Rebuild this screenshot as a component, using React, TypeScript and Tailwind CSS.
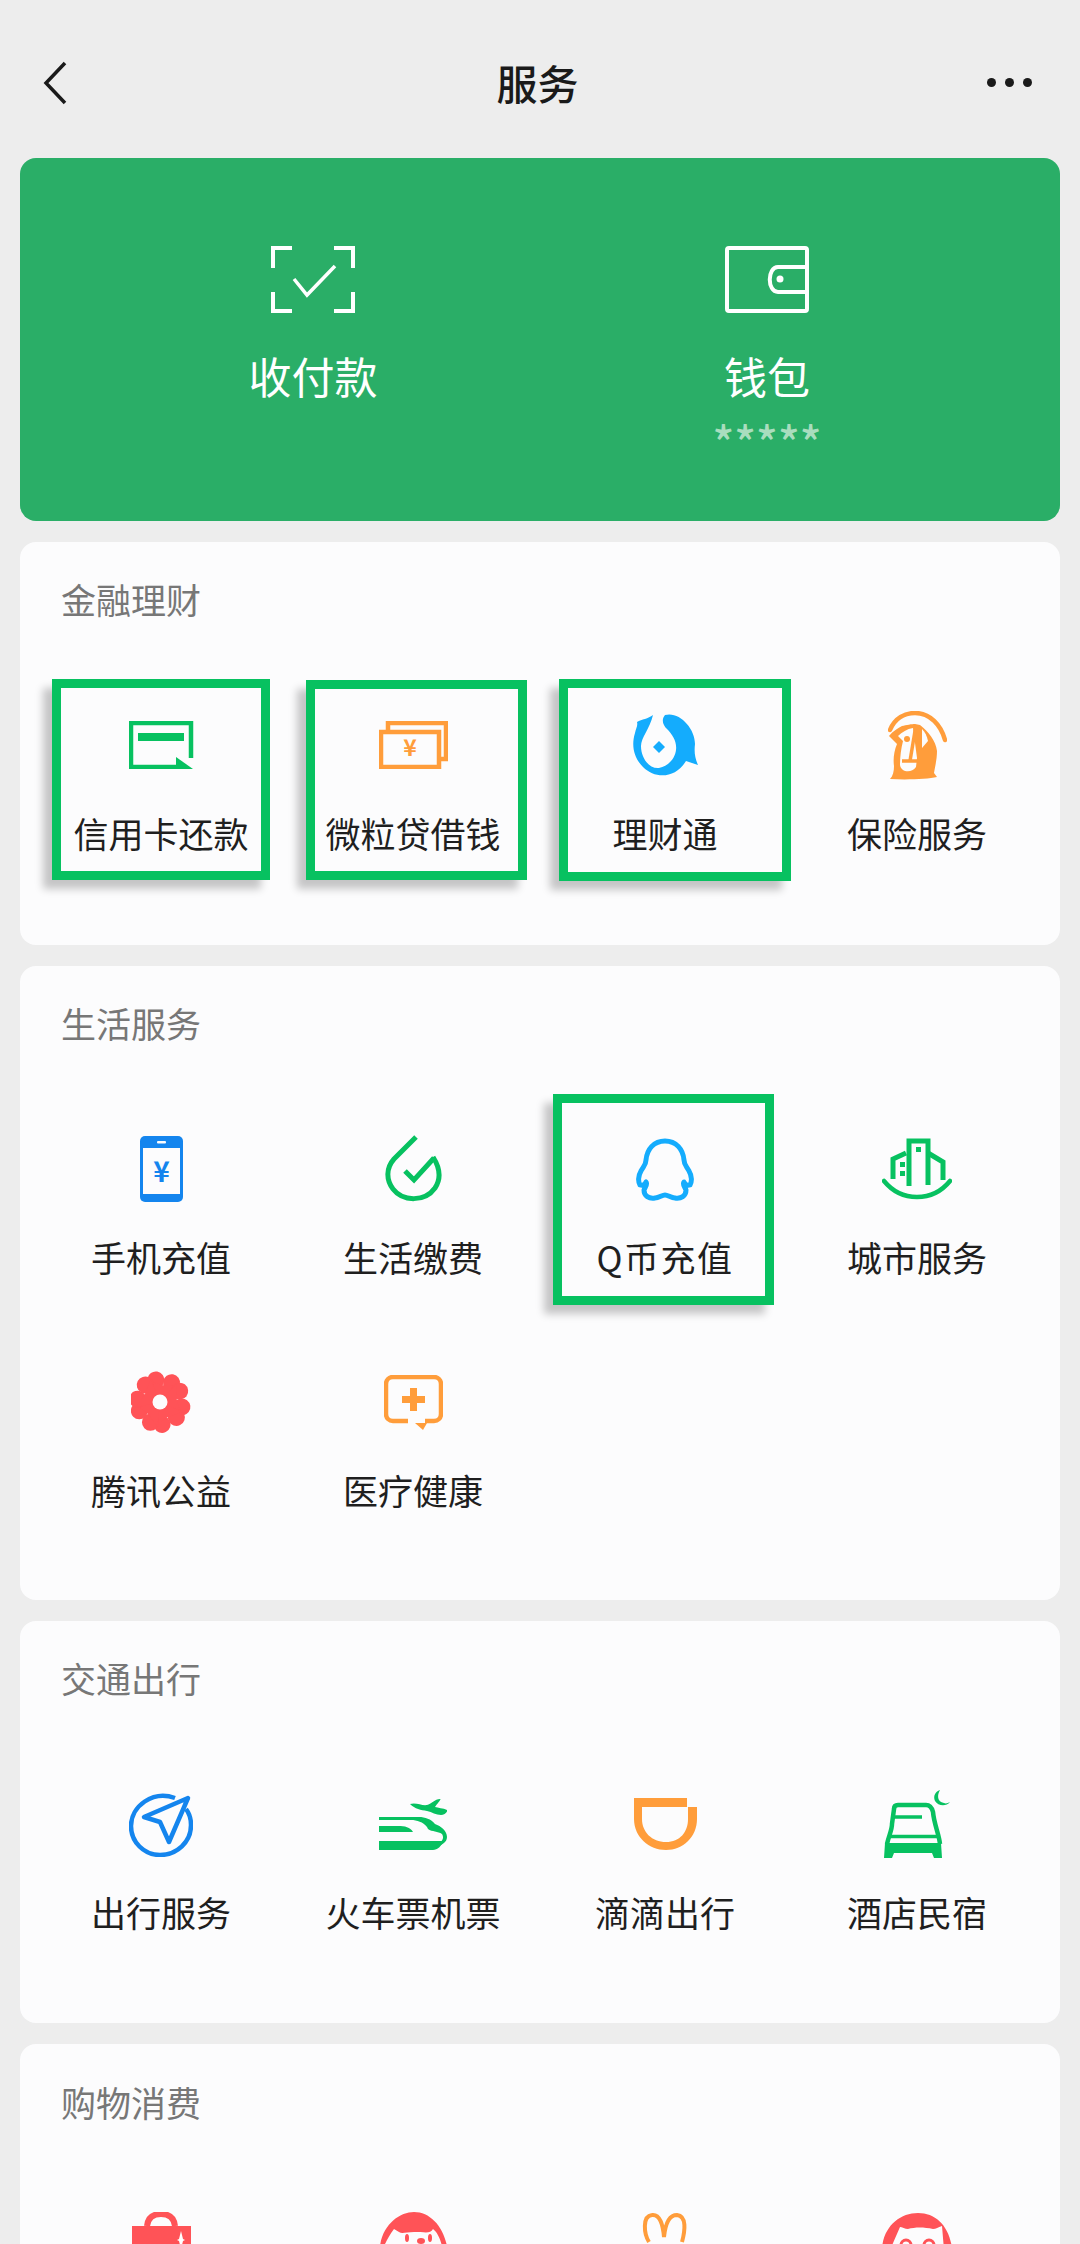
import React from 'react';

const GREEN = '#07C160';
const BLUE = '#1485EE';
const SKY = '#14ACFD';
const ORANGE = '#FF9D3B';
const RED = '#FF5357';
const PAPER = '#FCFCFD';

const ScanIcon = () => (
    <svg width="84" height="67" viewBox="0 0 84 67" fill="none" stroke="#fff" strokeWidth="4">
        <path d="M21 2H2v20M63 2h19v20M21 65H2V46M63 65h19V46" />
        <path d="M23 33l13 16L64 20" strokeWidth="3.5" />
    </svg>
);

const WalletIcon = () => (
    <svg width="84" height="67" viewBox="0 0 84 67" fill="none" stroke="#fff" strokeWidth="4">
        <rect x="2" y="2" width="80" height="63" rx="2" />
        <path d="M82 21H53c-11 0-11 25 0 25h29" />
        <circle cx="55" cy="33" r="3.5" fill="#fff" stroke="none" />
    </svg>
);

const CardIcon = () => (
    <svg width="65" height="48" viewBox="0 0 65 48" fill="none">
        <path d="M47 46H2V2h60v35" stroke={GREEN} strokeWidth="4.5" />
        <rect x="9" y="12" width="46" height="8" fill={GREEN} />
        <path d="M47 36l17 12H47z" fill={GREEN} />
    </svg>
);

const MoneyIcon = () => (
    <svg width="69" height="48" viewBox="0 0 69 48" fill="none">
        <rect x="2" y="11" width="58" height="35" stroke={ORANGE} strokeWidth="4.5" />
        <path d="M9 9V2h58v36h-5" stroke={ORANGE} strokeWidth="4.5" />
        <text x="31" y="35" fontSize="23" fontWeight="700" textAnchor="middle" fill={ORANGE}>¥</text>
    </svg>
);

const FishIcon = () => (
    <svg width="65" height="63" viewBox="0 0 65 63" fill={SKY}>
        <path d="M20 1C15 5 9 5 4 8c1 4-1 6-2 11-4 13-1 25 8 34 12 12 32 12 43-6l12 4c-3-7-4-13-3-21C62 14 46-3 32 1c-4 5-2 10 2 14 6 6 10 13 9 21-1 8-7 16-17 18-10 1-18-10-18-22 0-8 9-18 12-31z" />
        <path d="M26 27l6 6-6 6-6-6z" />
    </svg>
);

const InsuranceIcon = () => (
    <svg width="59" height="69" viewBox="0 0 59 69" fill="none">
        <path d="M2 19C7 7 17 2 27 2c15 0 26 12 30 27" stroke={ORANGE} strokeWidth="4.5" strokeLinecap="round" />
        <path d="M32 14C40 20 48 30 49 40c0 8-2 16-3 22l3 4c-9 2-29 3-47 2 3-3 4-8 4-13-1-7 0-15 3-22L1 25c4-5 9-8 13-10 4-1 10-2 13-2z" fill={ORANGE} />
        <path d="M25 17c-6 1-11 4-15 8l5 5c-2 8-3 16-3 24 1 7 11 9 16 2l1-9z" fill={PAPER} />
        <path d="M34 18c3 3 5 7 6 12l-6 7z" fill={PAPER} />
        <circle cx="19" cy="28" r="3" fill={ORANGE} />
        <path d="M28 14l-6 36" stroke={ORANGE} strokeWidth="3.5" />
        <path d="M14 50h17" stroke={ORANGE} strokeWidth="3.5" />
    </svg>
);

const PhoneIcon = () => (
    <svg width="43" height="66" viewBox="0 0 43 66">
        <rect width="43" height="66" rx="5" fill={BLUE} />
        <rect x="3" y="12" width="37" height="46" fill={PAPER} />
        <rect x="17" y="5" width="9" height="2.5" rx="1" fill={PAPER} />
        <text x="21.5" y="46" fontSize="28" fontWeight="700" textAnchor="middle" fill={BLUE}>¥</text>
    </svg>
);

const BillIcon = () => (
    <svg width="57" height="68" viewBox="0 0 57 68" fill="none" stroke={GREEN} strokeWidth="5">
        <path d="M31 2L9 24C1 33 1 45 8 54c10 13 32 13 42-1 6-9 5-20-2-31" />
        <path d="M20 36l9 9 20-22" />
    </svg>
);

const QQIcon = () => (
    <svg width="58" height="63" viewBox="0 0 58 63" fill="none" stroke={SKY} strokeWidth="5" strokeLinejoin="round">
        <path d="M29 3c11 0 18 8 19 19 0 5 3 7 5 11 3 5 3 11 1 14-3 1-5-1-6-3-2 2 1 5 2 8 0 6-5 9-11 8-4 0-7-3-10-3s-6 3-10 3c-6 1-11-2-11-8 1-3 4-6 2-8-1 2-3 4-6 3-2-3-2-9 1-14 2-4 5-6 5-11C11 11 18 3 29 3z" />
    </svg>
);

const CityIcon = () => (
    <svg width="70" height="62" viewBox="0 0 70 62" fill="none" stroke={GREEN} strokeWidth="5">
        <path d="M2 43c9 11 20 16 33 16s24-5 33-16" strokeLinecap="round" strokeWidth="4.5" />
        <path d="M11 41V21l13-6" />
        <path d="M27 48V3h19v44" />
        <path d="M46 15l15 9v18" />
        <rect x="18" y="24" width="5" height="5" fill={GREEN} stroke="none" />
        <rect x="18" y="33" width="5" height="5" fill={GREEN} stroke="none" />
        <rect x="34" y="9" width="5" height="5" fill={GREEN} stroke="none" />
    </svg>
);

const FlowerIcon = () => (
    <svg width="61" height="62" viewBox="0 0 61 62" fill={RED}>
        {[10, 82, 154, 226, 298].map((a) => (
            <g key={a} transform={`rotate(${a} 29 31)`}>
                <circle cx="21" cy="10" r="8.500" />
                <circle cx="37" cy="10" r="8.500" />
                <path d="M29 31L13 12l16 2 16-2z" />
            </g>
        ))}
        <circle cx="29" cy="31" r="7.5" fill={PAPER} />
    </svg>
);

const MedicalIcon = () => (
    <svg width="59" height="55" viewBox="0 0 59 55" fill="none">
        <path d="M24 46H9c-4 0-7-3-7-7V9c0-4 3-7 7-7h41c4 0 7 3 7 7v30c0 4-3 7-7 7H41" stroke={ORANGE} strokeWidth="4.5" />
        <path d="M31 48h12l-4 7z" fill={ORANGE} />
        <path d="M26 13h7v8h8v7h-8v8h-7v-8h-8v-7h8z" fill={ORANGE} />
    </svg>
);

const NavIcon = () => (
    <svg width="64" height="65" viewBox="0 0 64 65" fill="none" stroke={BLUE} strokeWidth="4.5">
        <path d="M46 6C24-2 2 14 2 34c0 16 13 29 29 29 17 0 31-13 31-30 0-7-2-12-5-16" />
        <path d="M59 6L15 25l16 5 9 20z" strokeLinejoin="round" />
    </svg>
);

const TrainIcon = () => (
    <svg width="68" height="51" viewBox="0 0 68 51" fill={GREEN}>
        <path d="M31 5c6-2 12 2 17 1 4-1 8-6 13-6 2 0-3 5-5 8 3 1 8 1 12 3 1 2-3 5-6 5-5 0-9-3-14-4-6-1-12-2-17-7z" />
        <path d="M0 18h40c6 0 12 2 16 7 6 2 12 7 12 13 0 5-5 8-9 9l1-3c4-2 5-6 3-9-4-3-10-2-14-5l-1-2c-4-5-10-7-16-7H0z" />
        <path d="M0 27h19c7 0 12 1 15 6H0z" />
        <path d="M0 42h64c-1 5-6 9-10 9H0z" />
    </svg>
);

const DidiIcon = () => (
    <svg width="63" height="52" viewBox="0 0 63 52" fill={ORANGE}>
        <path fillRule="evenodd" d="M0 0h53v9h10v12c0 18-14 31-31 31S0 39 0 21zM8 9v12c0 13 10 23 24 23s22-10 22-23V9z" />
    </svg>
);

const BedIcon = () => (
    <svg width="66" height="68" viewBox="0 0 66 68" fill="none">
        <path d="M3 54C5 45 8 40 8 34l2-15c0-3 2-4 4-4h28c4 0 6 3 7 7 1 12 6 22 7 32" stroke={GREEN} strokeWidth="4.5" />
        <path d="M10 27h28" stroke={GREEN} strokeWidth="3.5" />
        <path d="M5 46.500h48" stroke={GREEN} strokeWidth="3.5" />
        <path d="M1 53h56l1 15h-8l-2-5H10l-2 5H0z" fill={GREEN} />
        <path d="M56 0c-3 5-3 12 4 13 2 1 4 0 6-1-4 5-12 4-15-1-2-5 0-9 5-11z" fill={GREEN} />
    </svg>
);

const BagIcon = () => (
    <svg width="59" height="70" viewBox="0 0 59 70">
        <path d="M15 14C16 5 22 2 29 2s13 3 14 12" fill="none" stroke={RED} strokeWidth="6" />
        <rect y="14" width="59" height="56" fill={RED} />
        <path d="M49 19l2 8 2 1-2 1-2 8-2-8-2-1 2-1z" fill="#fff" />
    </svg>
);

const PigIcon = () => (
    <svg width="67" height="70" viewBox="0 0 67 70">
        <path d="M0 34C3 12 20 0 34 0c16 0 29 14 33 34h-5c-2-8-5-14-9-17-3 5-7 3-19 3-8 0-12 2-15 0l-5-3C10 22 7 28 4 34z" fill={RED} />
        <ellipse cx="27" cy="26" rx="2" ry="4" fill={RED} />
        <ellipse cx="50" cy="26" rx="2" ry="4" fill={RED} />
        <ellipse cx="41" cy="29" rx="4" ry="3" fill={RED} />
    </svg>
);

const RabbitIcon = () => (
    <svg width="46" height="70" viewBox="0 0 46 70" fill="none" stroke={ORANGE} strokeWidth="4">
        <path d="M7 30C2 22 0 4 10 3c8-1 11 10 12 22 1-10 4-22 13-22 10 1 8 16 5 27" />
    </svg>
);

const CatIcon = () => (
    <svg width="70" height="70" viewBox="0 0 70 70">
        <path d="M0 36C2 14 18 1 36 1s31 13 34 35l-8 2-2-24c-4 1-6 3-9 3-9-2-18-2-25 0-3 0-6-2-8-2L8 38z" fill={RED} />
        <circle cx="24" cy="33" r="5" fill="none" stroke={RED} strokeWidth="3" />
        <circle cx="47" cy="33" r="5" fill="none" stroke={RED} strokeWidth="3" />
    </svg>
);

interface ServiceItem {
    label: string;
    icon: React.ReactNode;
    labelClass?: string;
    markClass?: string; // green annotation box drawn over the cell
}

interface Section {
    title: string;
    cardClass: string;
    items: ServiceItem[];
}

const sections: Section[] = [
    {
        title: '金融理财',
        cardClass: 'h-[403px]',
        items: [
            { label: '信用卡还款', icon: <CardIcon />, markClass: 'left-[17px] top-[15px] w-[218px] h-[201px]' },
            { label: '微粒贷借钱', icon: <MoneyIcon />, markClass: 'left-[19px] top-[16px] w-[221px] h-[200px]' },
            { label: '理财通', icon: <FishIcon />, markClass: 'left-[20px] top-[15px] w-[232px] h-[202px]' },
            { label: '保险服务', icon: <InsuranceIcon /> },
        ],
    },
    {
        title: '生活服务',
        cardClass: 'h-[634px]',
        items: [
            { label: '手机充值', icon: <PhoneIcon /> },
            { label: '生活缴费', icon: <BillIcon /> },
            { label: 'Q币充值', icon: <QQIcon />, labelClass: 'tracking-[1.5px]', markClass: 'left-[14px] top-[6px] w-[221px] h-[211px]' },
            { label: '城市服务', icon: <CityIcon /> },
            { label: '腾讯公益', icon: <FlowerIcon /> },
            { label: '医疗健康', icon: <MedicalIcon /> },
        ],
    },
    {
        title: '交通出行',
        cardClass: 'h-[402px]',
        items: [
            { label: '出行服务', icon: <NavIcon /> },
            { label: '火车票机票', icon: <TrainIcon /> },
            { label: '滴滴出行', icon: <DidiIcon /> },
            { label: '酒店民宿', icon: <BedIcon /> },
        ],
    },
];

const Cell: React.FC<{ item: ServiceItem }> = ({ item }) => (
    <div className="relative flex flex-col items-center pt-[46px]">
        <div className="flex h-[70px] items-center justify-center">{item.icon}</div>
        <div className={`mt-[29px] text-[35px] leading-[48px] text-[#1f1f1f] ${item.labelClass ?? ''}`}>{item.label}</div>
        {item.markClass && (
            <div className={`absolute border-[9px] border-[#07C160] shadow-[-9px_9px_8px_rgba(0,0,0,0.22)] ${item.markClass}`} />
        )}
    </div>
);

const App: React.FC = () => {
    return (
        <div className="h-[2244px] w-[1080px] overflow-hidden bg-[#EDEDED] font-['Noto_Sans_CJK_SC','Noto_Sans',sans-serif]">
            {/* Header */}
            <div className="grid h-[158px] grid-cols-[1fr_auto_1fr] items-start pl-[43px] pr-[48px] pt-[59px]">
                <svg width="24" height="44" viewBox="0 0 24 44" fill="none" stroke="#1a1a1a" strokeWidth="3.500" className="mt-[2px]">
                    <path d="M22 2L3 22l19 20" />
                </svg>
                <h1 className="text-[41px] font-medium leading-[46px] text-[#1a1a1a]">服务</h1>
                <div className="mt-[19px] flex justify-end gap-[9px]">
                    <span className="size-[9px] rounded-full bg-[#1a1a1a]" />
                    <span className="size-[9px] rounded-full bg-[#1a1a1a]" />
                    <span className="size-[9px] rounded-full bg-[#1a1a1a]" />
                </div>
            </div>

            <div className="flex flex-col gap-[21px] px-[20px]">
                {/* Pay and wallet */}
                <div className="grid h-[363px] grid-cols-2 rounded-[16px] bg-[#2AAE67] px-[66px] text-white">
                    <div className="flex flex-col items-center pt-[88px]">
                        <ScanIcon />
                        <div className="mt-[34px] text-[43px] leading-[56px]">收付款</div>
                    </div>
                    <div className="flex flex-col items-center pt-[88px]">
                        <WalletIcon />
                        <div className="mt-[34px] text-[43px] leading-[56px]">钱包</div>
                        <div className="mt-[16px] text-[45px] font-medium leading-[44px] text-[#A9DDBE]">*****</div>
                    </div>
                </div>

                {sections.map((section) => (
                    <div key={section.title} className={`rounded-[16px] bg-[#FCFCFD] ${section.cardClass}`}>
                        <div className="mb-[7px] flex h-[115px] items-center pl-[41px] text-[35px] text-[#777777]">{section.title}</div>
                        <div className="grid auto-rows-[233px] grid-cols-[repeat(4,252px)] pl-[15px]">
                            {section.items.map((item) => (
                                <Cell key={item.label} item={item} />
                            ))}
                        </div>
                    </div>
                ))}

                {/* Shopping, cut off by the bottom of the screen */}
                <div className="h-[400px] rounded-[16px] bg-[#FCFCFD]">
                    <div className="flex h-[116px] items-center pl-[41px] text-[35px] text-[#777777]">购物消费</div>
                    <div className="grid grid-cols-[repeat(4,252px)] pl-[15px] pt-[52px]">
                        <div className="flex justify-center"><BagIcon /></div>
                        <div className="flex justify-center"><PigIcon /></div>
                        <div className="flex justify-center"><RabbitIcon /></div>
                        <div className="flex justify-center"><CatIcon /></div>
                    </div>
                </div>
            </div>
        </div>
    );
};

export default App;
